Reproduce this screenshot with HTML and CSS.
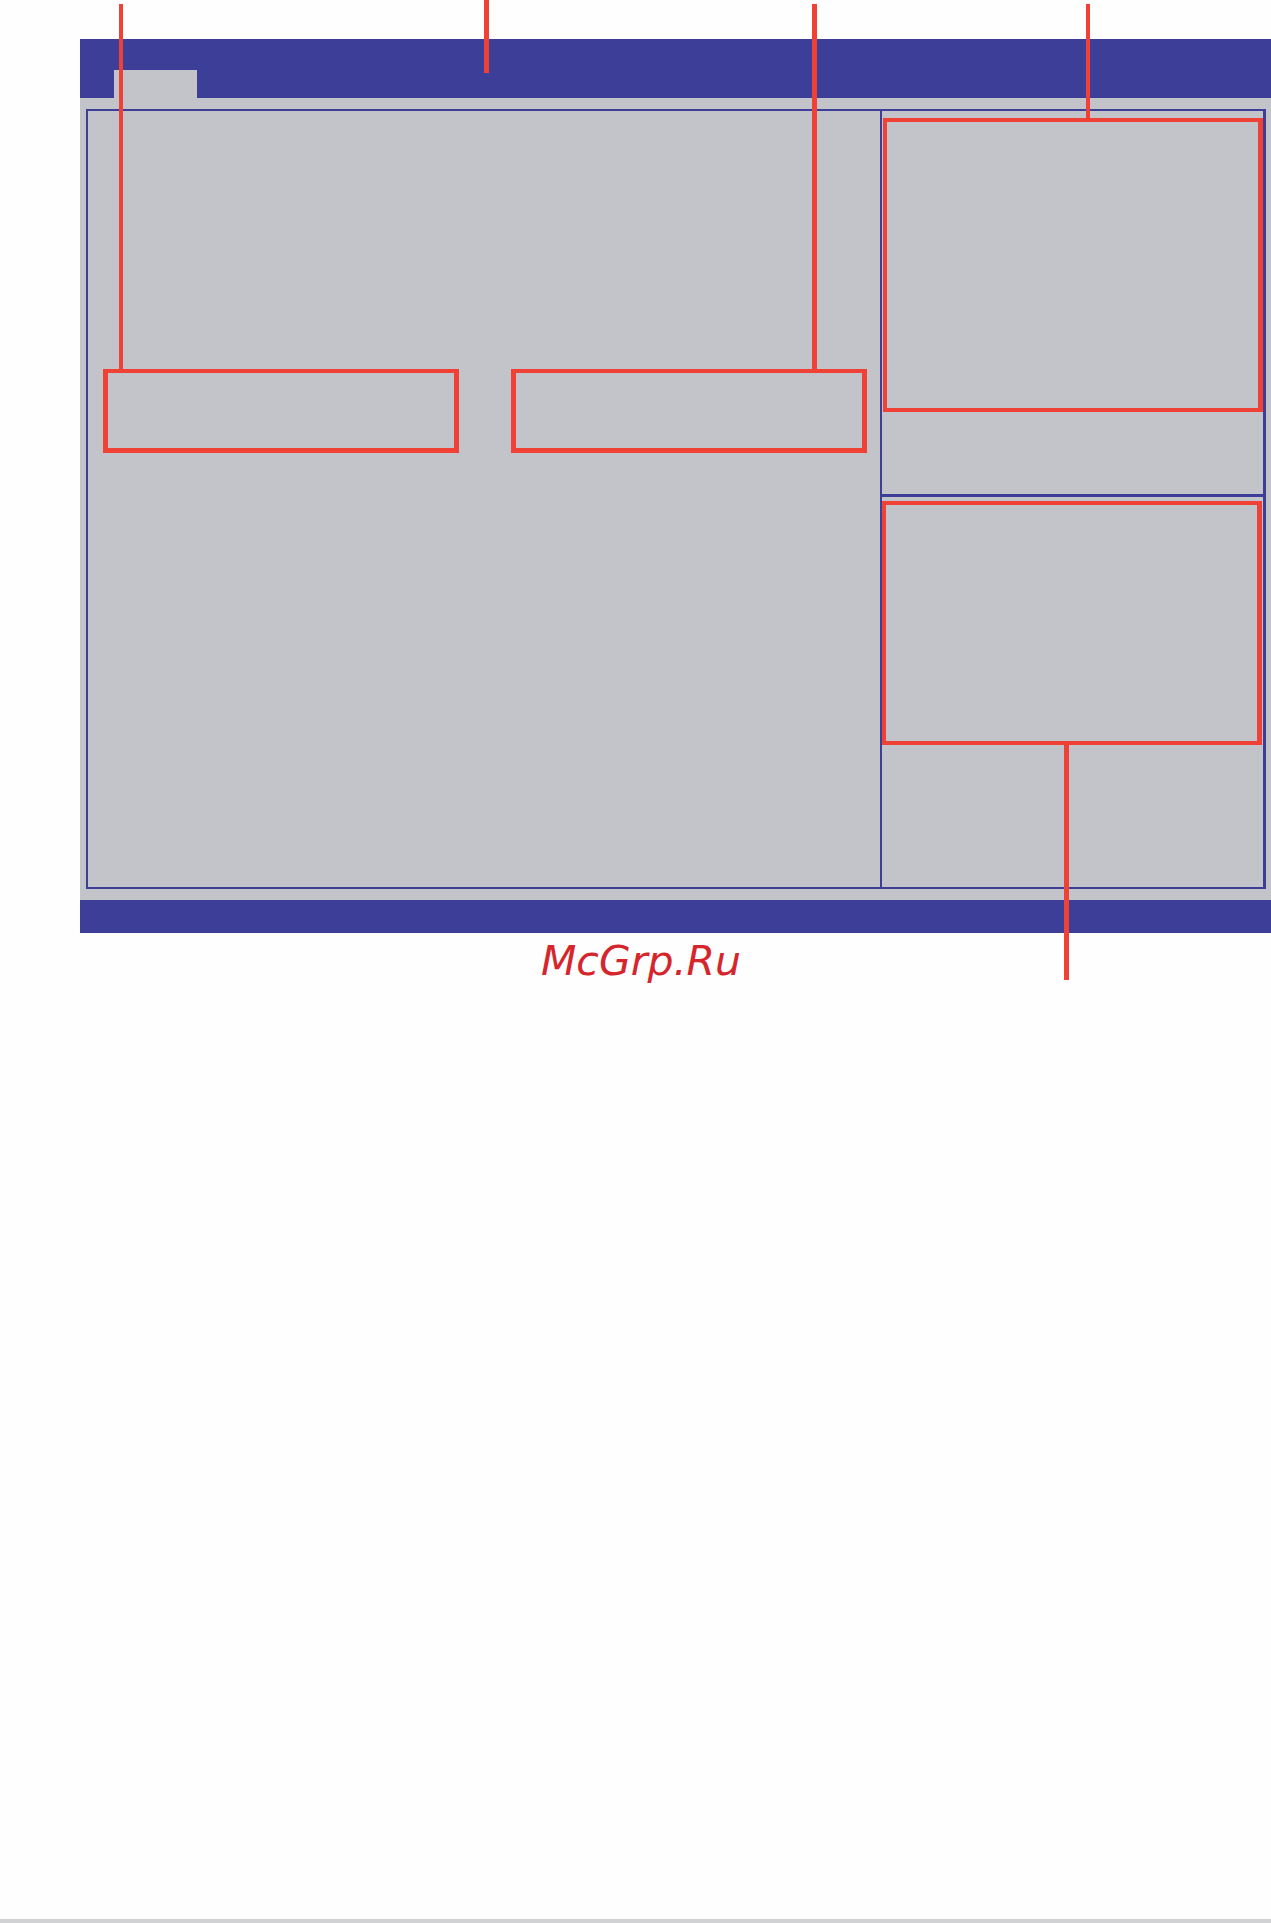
FILE: index.html
```html
<!DOCTYPE html>
<html lang="ru">
<head>
<meta charset="utf-8">
<title>BIOS layout</title>
<link rel="stylesheet" href="styles.css">
</head>
<body>
<div class="page">
  <div class="bios">
    <div class="topbar"><div class="tab"></div></div>
    <div class="main">
      <div class="frame">
        <div class="left">
          <div class="row">
            <div class="hl-wide"></div>
            <div class="hl-wide"></div>
          </div>
        </div>
        <div class="right">
          <div class="right-top"><div class="hl-help"></div></div>
          <div class="right-bottom"><div class="hl-keys"></div></div>
        </div>
      </div>
    </div>
    <div class="statusbar"></div>
  </div>
  <div class="rest">
    <div class="watermark">McGrp.Ru</div>
    <div class="strip"></div>
  </div>
  <div class="leader l1"></div>
  <div class="leader l2"></div>
  <div class="leader l3"></div>
  <div class="leader l4"></div>
  <div class="leader l5"></div>
</div>
</body>
</html>
```
FILE: styles.css
```css
body {
  margin: 0;
  background: #fefefe;
}
.page {
  position: relative;
  width: 1271px;
  height: 1923px;
  display: flex;
  flex-direction: column;
  overflow: hidden;
  background: #fefefe;
}
.bios {
  margin: 39px 0 0 80px;
  width: 1191px;
}
.topbar {
  height: 59px;
  background: #3d3e98;
  display: flex;
  align-items: flex-end;
  padding-left: 34px;
  box-sizing: border-box;
}
.tab {
  width: 83px;
  height: 28px;
  background: #c2c4c9;
}
.main {
  background: #c2c4c9;
  height: 802px;
  padding: 11px 5px 0 6px;
  box-sizing: border-box;
}
.frame {
  height: 780px;
  border: 2px solid #3d3e98;
  border-right-width: 3px;
  box-sizing: border-box;
  display: grid;
  grid-template-columns: 792px 1fr;
}
.left {
  padding: 258px 0 0 15px;
}
.row {
  display: flex;
  gap: 52px;
}
.hl-wide {
  width: 356px;
  height: 84px;
  border: 5px solid #ef4136;
  border-top-width: 4px;
  box-sizing: border-box;
}
.right {
  border-left: 2px solid #3d3e98;
  display: grid;
  grid-template-rows: 386px 1fr;
}
.right-top {
  padding: 7px 0 0 1px;
  border-bottom: 3px solid #3d3e98;
  box-sizing: border-box;
}
.hl-help {
  height: 294px;
  border: 4px solid #ef4136;
  border-right-width: 5px;
  box-sizing: border-box;
}
.right-bottom {
  padding: 4px 1px 0 0;
}
.hl-keys {
  height: 244px;
  border: 4px solid #ef4136;
  border-right-width: 5px;
  box-sizing: border-box;
}
.statusbar {
  height: 33px;
  background: #3d3e98;
}
.rest {
  flex: 1;
  display: flex;
  flex-direction: column;
}
.watermark {
  margin: 5px 0 0 541px;
  font-family: "DejaVu Sans", sans-serif;
  font-style: oblique;
  font-size: 41px;
  line-height: 47px;
  color: #d4262c;
}
.strip {
  margin-top: auto;
  height: 4px;
  background: #d1d2d4;
}
.leader {
  position: absolute;
  background: #ef4136;
}
.l1 { left: 119px; top: 4px; width: 4px; height: 365px; }
.l2 { left: 484px; top: 0; width: 5px; height: 73px; }
.l3 { left: 812px; top: 4px; width: 5px; height: 365px; }
.l4 { left: 1086px; top: 4px; width: 4px; height: 114px; }
.l5 { left: 1064px; top: 745px; width: 5px; height: 235px; }
```
